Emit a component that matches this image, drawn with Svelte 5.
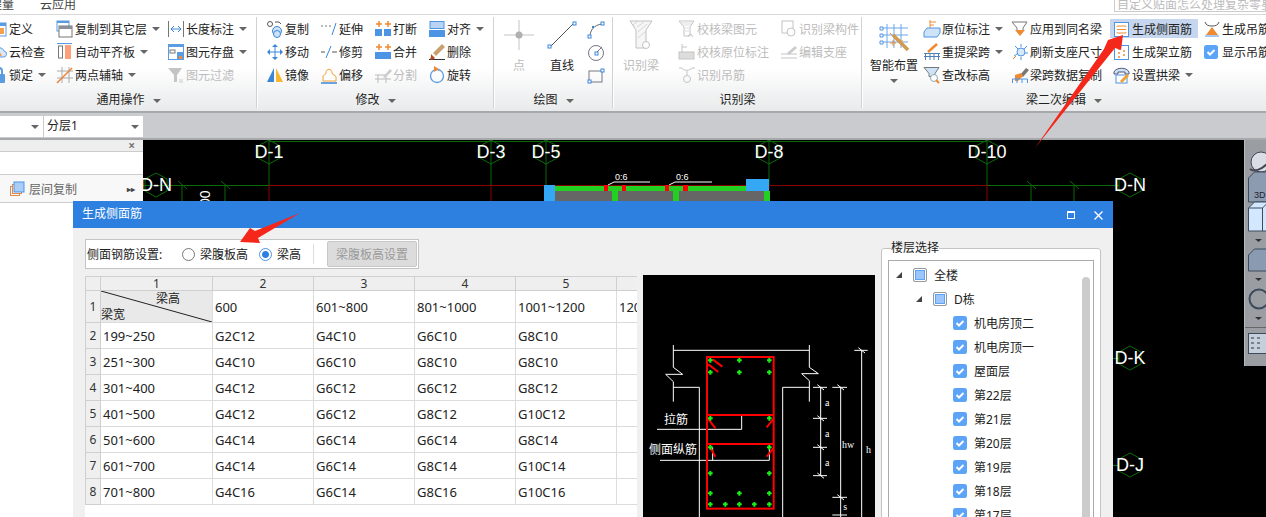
<script>
  const icons = {
    def: '<rect x="2" y="3" width="14" height="13" fill="#fff" stroke="#5b9be0"/><rect x="2" y="3" width="14" height="3" fill="#5b9be0"/><rect x="5" y="8" width="9" height="6" fill="#f6a04d"/>',
    cloud: '<path d="M4 14h9a3 3 0 0 0 1-6 5 5 0 0 0-9-1 4 4 0 0 0-1 7z" fill="#d8e8f8" stroke="#5b9be0"/><path d="M9 7l3 6H6z" fill="#f6a04d"/>',
    lock: '<path d="M6 8V5a3 3 0 0 1 6 0v3" fill="none" stroke="#5b9be0" stroke-width="2"/><rect x="3" y="8" width="12" height="9" rx="1" fill="#5b9be0"/>',
    copylayer: '<rect x="1" y="1" width="12" height="10" fill="#fff" stroke="#5b9be0"/><rect x="1" y="1" width="12" height="2" fill="#5b9be0"/><rect x="3" y="6" width="13" height="11" fill="#fff" stroke="#777"/><rect x="3" y="6" width="13" height="3" fill="#8a9099"/>',
    autoflat: '<rect x="1" y="0" width="15" height="1" fill="#5b9be0"/><rect x="2.500" y="3" width="4" height="12" fill="#fff" stroke="#777"/><rect x="9" y="2" width="6" height="14" fill="#fba078"/>',
    axis: '<path d="M1 5h16M1 12h16M6 1v16M13 1v16" stroke="#aaa" fill="none"/><path d="M1 17L16 2" stroke="#f08030" stroke-width="1.400"/>',
    len: '<path d="M1.500 1v16M16.500 1v16" stroke="#777" fill="none"/><path d="M4 9h10M4 9l3-3M4 9l3 3M14 9l-3-3M14 9l-3 3" stroke="#3c86d8" fill="none"/>',
    save: '<rect x="1.500" y="1.500" width="15" height="15" fill="#fff" stroke="#5b9be0"/><rect x="1" y="1" width="16" height="3" fill="#5b9be0"/><rect x="3" y="7" width="5" height="3" fill="none" stroke="#777"/><rect x="10" y="9" width="7" height="8" fill="#5b9be0"/><rect x="12" y="13" width="3" height="3" fill="#f68a3c"/>',
    filter: '<path d="M1 2h14L10 9v7H7V9z" fill="#c4c4c4"/><path d="M12 14h4M12 16h4" stroke="#ccc"/>',
    copy: '<circle cx="4" cy="4" r="2.500" fill="none" stroke="#555"/><path d="M9 2h4l2 2" fill="none" stroke="#555"/><circle cx="11" cy="11" r="4.500" fill="#cfe3f8" stroke="#3c86d8"/><circle cx="11" cy="14" r="3.500" fill="#cfe3f8" stroke="#3c86d8"/>',
    move: '<path d="M9 2v14M2 9h14" stroke="#3c86d8"/><path d="M9 1l3 3H6zM9 17l3-3H6zM1 9l3-3v6zM17 9l-3-3v6z" fill="#3c86d8"/>',
    mirror: '<path d="M8 2v14H1z" fill="#3c86d8"/><path d="M10 2v14h7z" fill="#f7b733"/>',
    extend: '<path d="M1 6h2M5 6h2M9 6h2" stroke="#777"/><path d="M12 15L16 3" stroke="#3c86d8"/>',
    trim: '<path d="M1 9h4M12 9h5" stroke="#555"/><path d="M6 15L11 3" stroke="#3c86d8"/>',
    offset: '<path d="M3 15V10c0-1 3-1 3-3 0-5 6-5 6 0 0 2 4 2 4 4v4z" fill="#fff" stroke="#f0a030"/><path d="M1 17h16" stroke="#3c86d8" stroke-width="1.500"/>',
    brk: '<path d="M5 1v6M2 4h6M14 1v6M11 4h6" stroke="#f08a30" stroke-width="1.500"/><rect x="1" y="9" width="7" height="7" fill="#4c94e4"/><rect x="10" y="9" width="7" height="7" fill="#4c94e4"/>',
    merge: '<path d="M5 1v6M2 4h6M14 1v6M11 4h6" stroke="#f08a30" stroke-width="1.500"/><rect x="1" y="9" width="16" height="7" fill="#4c94e4"/>',
    split: '<path d="M1 9h11v8M1 13h16M4 9v8" fill="none" stroke="#bbb"/><path d="M9 11l7-8 2 2-7 7z" fill="#ccc"/>',
    align: '<rect x="2" y="1.500" width="14" height="7" fill="#b9d3f3" stroke="#4c94e4"/><rect x="1" y="10" width="16" height="7" fill="#4c94e4"/>',
    del: '<path d="M1 16.500h16" stroke="#333"/><path d="M5 10L14 1l3 3-9 9z" fill="#caa070"/><path d="M3 11l4 4c-2 2-4 2-5 1 1-1 1-3 1-5z" fill="#b94a20"/>',
    rotate: '<circle cx="9" cy="10" r="6.500" fill="none" stroke="#5b9be0" stroke-width="1.300"/><path d="M6 0l5 3-5 3z" fill="#f08a30"/>',
    orig: '<path d="M7 0v9M7 2h6M7 5h4" stroke="#f08a30"/><path d="M1 12l3-4h13v5l-3 4H1z" fill="#cfe3f8" stroke="#4c94e4"/>',
    retake: '<path d="M5 9L14 1" stroke="#f08a30" stroke-width="2.500"/><path d="M1 10.500h16M2.500 10v7M7 11v6M11 11v6M15.500 10v7M1 13.500h16" fill="none" stroke="#4c7fb8"/>',
    elev: '<path d="M1 1.500h15l-4 6v3H6v-3z" fill="#cfe3f8" stroke="#777"/><circle cx="11" cy="12" r="3.500" fill="#fff" stroke="#8ab"/><path d="M13 14l3 3" stroke="#f08a30" stroke-width="2"/>',
    apply: '<path d="M1 2h15l-4 6v3H6V8z" fill="#fff" stroke="#777"/><path d="M4 10h10l-5 6z" fill="#f08a30"/>',
    refresh: '<circle cx="10" cy="9" r="4" fill="#d8e8f8" stroke="#4c94e4"/><path d="M10 1v3M16 3l-3 3M17 10h-3M4 3l3 3M3 13l3-2M10 14v3" stroke="#4c94e4"/><path d="M2 16l3-3" stroke="#f08a30"/>',
    paste: '<path d="M9 9l6-7 3 2-6 7z" fill="#777"/><path d="M4 9l6-2 2 3-5 5H4z" fill="#f08a30"/><path d="M1.500 17V13h15v4M6 13v4M11 13v4" fill="none" stroke="#4c94e4"/>',
    side: '<rect x="1.500" y="2.500" width="14" height="14" fill="#fff" stroke="#4c94e4"/><path d="M4 7c0-1 0-1 1-1h7c1 0 1 0 1 1M4 12c0 1 0 1 1 1h7c1 0 1 0 1-1M4 9.500h9" fill="none" stroke="#f08a30"/>',
    stand: '<rect x="1.500" y="2.500" width="14" height="14" fill="#fff" stroke="#4c94e4"/><path d="M6 5v2M6 9v2M6 13v2M11 7v2M11 11v2" stroke="#f08a30" stroke-width="1.500"/>',
    arch: '<path d="M1 6c2-5 13-5 15 0v2h-4V6H5v2H1z" fill="#cfe3f8" stroke="#557"/><rect x="3" y="9" width="11" height="8" fill="#fff" stroke="#4c94e4"/><path d="M7 15l7-7 2 2-7 7z" fill="#f0a030"/>',
    hang: '<path d="M2 2c1 3 3 4 7 4s6-1 7-4" fill="none" stroke="#555"/><path d="M9 7l6 8H3z" fill="#f08a30"/><path d="M2 16h14" stroke="#4c94e4"/>',
    checked: '<rect x="1" y="2" width="14" height="14" rx="2.500" fill="#5ba4f8"/><path d="M4.500 9l2.500 2.500 4.500-4.500" fill="none" stroke="#fff" stroke-width="2"/>',
    vbeam: '<path d="M1 1h15l-4 6v9H6V7z" fill="none" stroke="#c4c4c4"/><path d="M3 3h11M3 5h10M7 8h4M7 11h4" stroke="#ddd"/><path d="M10 16l3-2 2 3" fill="none" stroke="#c4c4c4"/>',
    vpart: '<rect x="2" y="1" width="11" height="12" fill="none" stroke="#c4c4c4"/><circle cx="11" cy="12" r="4" fill="#fff" stroke="#c4c4c4"/>',
    vorig: '<path d="M4 1v8M4 4h5" stroke="#c4c4c4"/><rect x="1" y="9" width="15" height="7" fill="#ddd" stroke="#c4c4c4"/>',
    vhang: '<path d="M1 2h3c1 3 8 3 10 0h3M9 5v4" fill="none" stroke="#c4c4c4"/><circle cx="9" cy="13" r="3.500" fill="none" stroke="#c4c4c4"/>',
    vsup: '<path d="M7 10l8-7 2 2-8 7z" fill="#ccc"/><path d="M1 11h16M1 15h16" stroke="#c4c4c4"/>',
    arc: '<path d="M3 16c0-7 4-12 12-13" fill="none" stroke="#666"/><rect x="1" y="14" width="3" height="3" fill="#fff" stroke="#3c86d8"/><rect x="14" y="1" width="3" height="3" fill="#fff" stroke="#3c86d8"/><rect x="5" y="5" width="2" height="2" fill="#3c86d8"/>',
    circ: '<circle cx="9" cy="9" r="7.500" fill="none" stroke="#778"/><rect x="8" y="8" width="3" height="3" fill="#fff" stroke="#3c86d8"/><path d="M10 8l5-5" stroke="#778"/>',
    rect: '<rect x="2" y="4" width="13" height="11" fill="none" stroke="#778"/><rect x="1" y="13" width="3" height="3" fill="#fff" stroke="#3c86d8"/><rect x="14" y="2" width="3" height="3" fill="#fff" stroke="#3c86d8"/>'
  }

  const groupA = [
    { w: 66, items: [{ t: '定义', i: 'def' }, { t: '云检查', i: 'cloud' }, { t: '锁定', i: 'lock', drop: true }] },
    { w: 111, items: [{ t: '复制到其它层', i: 'copylayer', drop: true }, { t: '自动平齐板', i: 'autoflat', drop: true }, { t: '两点辅轴', i: 'axis', drop: true }] },
    { w: 89, items: [{ t: '长度标注', i: 'len', drop: true }, { t: '图元存盘', i: 'save', drop: true }, { t: '图元过滤', i: 'filter', off: true }] }
  ]
  const groupB = [
    { w: 54, items: [{ t: '复制', i: 'copy' }, { t: '移动', i: 'move' }, { t: '镜像', i: 'mirror' }] },
    { w: 54, items: [{ t: '延伸', i: 'extend' }, { t: '修剪', i: 'trim' }, { t: '偏移', i: 'offset' }] },
    { w: 54, items: [{ t: '打断', i: 'brk' }, { t: '合并', i: 'merge' }, { t: '分割', i: 'split', off: true }] },
    { w: 60, items: [{ t: '对齐', i: 'align', drop: true }, { t: '删除', i: 'del' }, { t: '旋转', i: 'rotate' }] }
  ]
  const groupD = [
    { w: 102, items: [{ t: '校核梁图元', i: 'vbeam', off: true }, { t: '校核原位标注', i: 'vorig', off: true }, { t: '识别吊筋', i: 'vhang', off: true }] },
    { w: 92, items: [{ t: '识别梁构件', i: 'vpart', off: true }, { t: '编辑支座', i: 'vsup', off: true }] }
  ]
  const groupE = [
    { w: 88, items: [{ t: '原位标注', i: 'orig', drop: true }, { t: '重提梁跨', i: 'retake', drop: true }, { t: '查改标高', i: 'elev' }] },
    { w: 102, items: [{ t: '应用到同名梁', i: 'apply' }, { t: '刷新支座尺寸', i: 'refresh' }, { t: '梁跨数据复制', i: 'paste' }] },
    { w: 90, items: [{ t: '生成侧面筋', i: 'side', on: true }, { t: '生成架立筋', i: 'stand' }, { t: '设置拱梁', i: 'arch', drop: true }] },
    { w: 70, items: [{ t: '生成吊筋', i: 'hang' }, { t: '显示吊筋', i: 'checked' }] }
  ]

  const heads = ['2', '3', '4', '5', '6']
  const firstRow = ['600', '601~800', '801~1000', '1001~1200', '1201~1400']
  const rows = [
    ['199~250', 'G2C12', 'G4C10', 'G6C10', 'G8C10', ''],
    ['251~300', 'G4C10', 'G6C10', 'G8C10', 'G8C10', ''],
    ['301~400', 'G4C12', 'G6C12', 'G6C12', 'G8C12', ''],
    ['401~500', 'G4C12', 'G6C12', 'G8C12', 'G10C12', ''],
    ['501~600', 'G4C14', 'G6C14', 'G6C14', 'G8C14', ''],
    ['601~700', 'G4C14', 'G6C14', 'G8C14', 'G10C14', ''],
    ['701~800', 'G4C16', 'G6C14', 'G8C16', 'G10C16', '']
  ]

  const floors = ['机电房顶二', '机电房顶一', '屋面层', '第22层', '第21层', '第20层', '第19层', '第18层', '第17层', '第16层']

  // cad grid bubbles, in page coordinates
  const bubbles = [
    { x: 269, y: 152, t: 'D-1' }, { x: 491, y: 152, t: 'D-3' }, { x: 546, y: 152, t: 'D-5' },
    { x: 769, y: 152, t: 'D-8' }, { x: 987, y: 152, t: 'D-10' }, { x: 156, y: 185, t: 'D-N' },
    { x: 1130, y: 185, t: 'D-N' }, { x: 1130, y: 358, t: 'D-K' }, { x: 1130, y: 465, t: 'D-J' }
  ]
  const hex = (x, y) => `${x},${y - 12} ${x + 11},${y - 6} ${x + 11},${y + 6} ${x},${y + 12} ${x - 11},${y + 6} ${x - 11},${y - 6}`

  const dots = [[241,271],[328,271],[418,271],[241,307],[328,307],[418,307],[241,445],[418,445],[241,532],[418,532],[241,610],[418,610],[241,670],[328,670],[418,670],[241,703],[286,703],[328,703],[373,703],[418,703]]
</script>

{#snippet icon(name, size = 18)}
  <svg class="ico" width={size} height={size} viewBox="0 0 18 18">{@html icons[name]}</svg>
{/snippet}

{#snippet columns(cols)}
  {#each cols as col}
    <div class="col" style="width:{col.w}px">
      {#each col.items as it}
        <div class="item" class:off={it.off} class:on={it.on}>
          {@render icon(it.i)}
          <span>{it.t}</span>
          {#if it.drop}<i class="tri"></i>{/if}
        </div>
      {/each}
    </div>
  {/each}
{/snippet}

<div class="app">
  <div class="tabs">
    <span class="tab first">工程量</span>
    <span class="tab">云应用</span>
    <div class="search">自定义贴面怎么处理复杂零星梁</div>
  </div>

  <div class="ribbon">
    <section class="group ga">
      <div class="body shift">{@render columns(groupA)}</div>
      <div class="foot">通用操作 <i class="tri"></i></div>
    </section>
    <section class="group gb">
      <div class="body">{@render columns(groupB)}</div>
      <div class="foot">修改 <i class="tri"></i></div>
    </section>
    <section class="group gc">
      <div class="body">
        <div class="large off pt">
          <svg width="30" height="30" viewBox="0 0 30 30"><path d="M15 0v30M0 15h30" stroke="#c4c4c4"/><circle cx="15" cy="15" r="3.500" fill="#b0b0b0"/></svg>
          <span>点</span>
        </div>
        <div class="large ln">
          <svg width="30" height="30" viewBox="0 0 30 30"><path d="M3 27L27 3" stroke="#555"/><rect x="1" y="25" width="3" height="3" fill="#fff" stroke="#3c86d8"/><rect x="26" y="2" width="3" height="3" fill="#fff" stroke="#3c86d8"/></svg>
          <span>直线</span>
        </div>
        <div class="smalls">{@render icon('arc')}{@render icon('circ')}{@render icon('rect')}</div>
      </div>
      <div class="foot">绘图 <i class="tri"></i></div>
    </section>
    <section class="group gd">
      <div class="body">
        <div class="large off rec">
          <svg width="30" height="30" viewBox="0 0 24 30"><path d="M1 1h22l-6 9v18H7V10z" fill="#f6f6f6" stroke="#c0c0c0"/><path d="M4 5l4-3M8 7l7-5M9 12l9-8M9 18l8-7" stroke="#d6d6d6"/><circle cx="17" cy="25" r="3.500" fill="#fff" stroke="#c0c0c0"/></svg>
          <span>识别梁</span>
        </div>
        {@render columns(groupD)}
      </div>
      <div class="foot">识别梁</div>
    </section>
    <section class="group ge">
      <div class="body">
        <div class="large smart">
          <svg width="30" height="30" viewBox="0 0 30 30">
            <path d="M8 4v24M15 4v24M22 4v24M3 8h26M3 15h26M3 22h26" stroke="#6aa6e8"/>
            <path d="M1 7h3v3H1zM1 14h3v3H1zM1 21h3v3H1z" fill="#fff" stroke="#4c94e4"/>
            <path d="M11 13l3 3M14 20v6M11 23h6M21 19v5M19 21h5" stroke="#f08a30"/>
            <path d="M14 15l15 15" stroke="#d09a50" stroke-width="3.500"/>
          </svg>
          <span>智能布置</span>
          <i class="tri"></i>
        </div>
        {@render columns(groupE)}
      </div>
      <div class="foot">梁二次编辑 <i class="tri"></i></div>
    </section>
  </div>

  <div class="bar">
    <div class="select a"><i class="tri"></i></div>
    <div class="select b">分层1<i class="tri"></i></div>
  </div>

  <div class="work">
    <aside class="left">
      <div class="left-head"><span>×</span></div>
      <div class="left-gap"></div>
      <div class="left-row">
        <svg width="16" height="16" viewBox="0 0 16 16"><rect x="1.500" y="5.500" width="9" height="9" fill="none" stroke="#e08a50"/><rect x="3.500" y="3.500" width="9" height="9" fill="#fff" stroke="#e08a50"/><rect x="5" y="1" width="10" height="10" fill="#a9cdf5" stroke="#4c94e4"/></svg>
        <span>层间复制</span>
        <b>▸▸</b>
      </div>
    </aside>

    <svg class="cad" viewBox="143 140 1123 377">
      <path d="M269 141.500H987" stroke="#0a6b0a" fill="none"/>
      <path d="M269 140V185M491 140V185M546 140V185M769 140V185M987 140V185" stroke="#0a6b0a"/>
      <path d="M143 185.500H269M987 185.500H1119" stroke="#0a6b0a"/>
      <path d="M269 185.500H987" stroke="#8b0000"/>
      <path d="M269 185V201M491 185V201M546 185V201M769 185V201M987 185V201" stroke="#8b0000"/>
      <path d="M182 185V201M225 185V201M1031 185V201M1074 185V201M178 181l9 8M221 181l9 8M1027 181l9 8M1070 181l9 8" stroke="#0a6b0a"/>
      <path d="M1113 358.500h6M1113 465.500h6" stroke="#0a6b0a"/>
      {#each bubbles as b}
        <polygon points={hex(b.x, b.y)} fill="none" stroke="#0a6b0a"/>
        <text class="axis-t" x={b.x} y={b.y + 6} text-anchor="middle">{b.t}</text>
      {/each}
      <text class="axis-t zero" transform="translate(210 206) rotate(-90)">00</text>

      <rect x="544" y="185" width="11" height="16" fill="#35a8f5"/>
      <rect x="555" y="191" width="214" height="10" fill="#666"/>
      <rect x="555" y="186" width="214" height="5" fill="#22d022"/>
      <rect x="612" y="191" width="6" height="10" fill="#22d022"/>
      <rect x="673" y="191" width="6" height="10" fill="#22d022"/>
      <rect x="764" y="191" width="6" height="10" fill="#22d022"/>
      <rect x="746" y="179" width="23" height="12" fill="#35a8f5"/>
      <path d="M604 185h4v6h-4zM622 185h4v6h-4zM665 185h4v6h-4zM683 185h5v6h-5z" fill="#f00"/>
      <path d="M608 185l6-3h36M669 185l6-3h37" fill="none" stroke="#fff"/>
      <text class="small-t" x="615" y="180">0:6</text>
      <text class="small-t" x="676" y="180">0:6</text>
    </svg>

    <div class="strip">
      <svg width="22" height="226" viewBox="0 0 22 226">
        <circle cx="16" cy="22" r="10" fill="#d9dee4" stroke="#445"/>
        <path d="M5 29c4 3 11 1 17-5" fill="none" stroke="#445" stroke-width="2"/>
        <path d="M3.500 38l6-6h14v30h-20z" fill="#8d9bb0" stroke="#3d4a5c"/>
        <text x="9" y="58" font-size="9" font-family="Liberation Sans" fill="#1c2530">3D</text>
        <path d="M3.500 68l6-6h14v29h-20z" fill="#d3e8ff" stroke="#3d4a5c"/>
        <path d="M3.500 68h14v23M17.500 68l6-6" fill="none" stroke="#3d4a5c"/>
        <path d="M10 99h7l-3.500 3z" fill="#333"/>
        <path d="M3.500 115l6-6h14v22h-20z" fill="#8a9ab0" stroke="#3d4a5c"/>
        <path d="M10 138h7l-3.500 3z" fill="#333"/>
        <circle cx="14" cy="159" r="9.500" fill="none" stroke="#3d4a5c" stroke-width="2"/>
        <path d="M10 177h7l-3.500 3z" fill="#333"/>
        <path d="M0 187.500h22" stroke="#666"/>
        <rect x="3.500" y="193.500" width="20" height="20" fill="#c4cfdb" stroke="#3d4a5c"/>
        <path d="M6 198h3M6 203h3M6 208h3M12 198h3M12 203h3M12 208h3" stroke="#334"/>
      </svg>
    </div>
  </div>

  <div class="dialog">
    <header class="title">
      <span>生成侧面筋</span>
      <svg class="win" width="8" height="8" viewBox="0 0 8 8"><rect x=".5" y="1.500" width="7" height="6" fill="none" stroke="#fff"/><path d="M0 1h8" stroke="#fff" stroke-width="2"/></svg>
      <svg class="close" width="9" height="9" viewBox="0 0 9 9"><path d="M.5 .5l8 8M8.500 .5l-8 8" stroke="#fff" stroke-width="1.300"/></svg>
    </header>
    <div class="dlg-body">
      <div class="dlg-left">
        <div class="settings">
          <span class="lbl">侧面钢筋设置:</span>
          <span class="radio"></span><span class="r1">梁腹板高</span>
          <span class="radio sel"></span><span class="r2">梁高</span>
          <span class="sep"></span>
          <button disabled>梁腹板高设置</button>
        </div>
        <div class="lower">
          <div class="grid">
            <table>
              <colgroup><col class="c0"/><col class="c1"/><col class="cn"/><col class="cn"/><col class="cn"/><col class="cn"/><col class="cn"/></colgroup>
              <thead>
                <tr><th></th><th>1</th>{#each heads as h}<th>{h}</th>{/each}</tr>
              </thead>
              <tbody>
                <tr class="tall">
                  <th>1</th>
                  <td class="diag">
                    <svg width="111" height="31" viewBox="0 0 111 31" preserveAspectRatio="none"><path d="M0 0L111 31" stroke="#222"/></svg>
                    <span class="d1">梁高</span><span class="d2">梁宽</span>
                  </td>
                  {#each firstRow as c}<td>{c}</td>{/each}
                </tr>
                {#each rows as r, n}
                  <tr>
                    <th>{n + 2}</th>
                    {#each r as c}<td>{c}</td>{/each}
                  </tr>
                {/each}
              </tbody>
            </table>
          </div>
          <div class="pic">
            <svg width="232" height="242" viewBox="39 15 696 726">
              <g fill="none" stroke="#fff" stroke-width="3">
                <path d="M130 241H538M130 225V292L158 313H107L130 335V395M538 225V292L565 311H515L538 332V395"/>
                <path d="M130 352H208V741M538 352H458V741"/>
                <path d="M81 478H335V435M90 571H418V532M248 571V532"/>
                <path d="M572 352V617M549 352H591M549 445H591M549 532H591M549 617H591M562 344l20 16M562 437l20 16M562 524l20 16M562 609l20 16"/>
                <path d="M632 352V741M607 352H651M607 682H651M607 735H651M622 344l20 16M622 674l20 16"/>
                <path d="M695 241V741M673 241H713M685 233l20 16"/>
              </g>
              <g fill="none" stroke="#f00" stroke-width="6">
                <rect x="231" y="261" width="200" height="455"/>
                <path d="M231 435H431M231 522H431M248 268L277 290M235 283L265 306M235 447L256 475M430 447L410 472M240 530L256 560M430 535L410 560"/>
              </g>
              {#each dots as d}
                <path d="M{d[0] - 7} {d[1]}h14M{d[0]} {d[1] - 7}v14" stroke="#18f018" stroke-width="6"/>
              {/each}
              <g class="pic-t">
                <text x="102" y="462">拉筋</text>
                <text x="57" y="553">侧面纵筋</text>
              </g>
              <g class="pic-s">
                <text x="585" y="407">a</text><text x="585" y="500">a</text><text x="585" y="587">a</text>
                <text x="636" y="535">hw</text><text x="708" y="550">h</text><text x="640" y="720">s</text>
              </g>
            </svg>
          </div>
        </div>
      </div>
      <fieldset>
        <legend>楼层选择</legend>
        <div class="tree">
          <div class="row" style="padding-left:6px"><i class="exp"></i><i class="part"></i><span>全楼</span></div>
          <div class="row" style="padding-left:26px"><i class="exp"></i><i class="part"></i><span>D栋</span></div>
          {#each floors as f}
            <div class="row" style="padding-left:46px"><i class="exp none"></i>
              <svg class="chk" width="14" height="14" viewBox="0 0 14 14"><rect width="14" height="14" rx="2.500" fill="#5ba4f8"/><path d="M3.500 7l2.500 2.500 4.500-4.500" fill="none" stroke="#fff" stroke-width="2"/></svg>
              <span>{f}</span>
            </div>
          {/each}
          <div class="thumb"></div>
        </div>
      </fieldset>
    </div>
  </div>

  <!-- red annotation arrows drawn over the screenshot -->
  <svg class="marks" width="1266" height="517" viewBox="0 0 1266 517">
    <path d="M1035 148L1104 49L1108 40L1123 35L1121 50L1115 48Z" fill="#f5261a"/>
    <path d="M300 213L255 231L250 228L240 242L260 243L258 238Z" fill="#f5261a"/>
  </svg>
</div>

<style>
  :global(body) {
    margin: 0;
    background: #fff;
  }
  .app {
    position: relative;
    width: 1266px;
    height: 517px;
    overflow: hidden;
    display: flex;
    flex-direction: column;
    font-family: "Noto Sans", "Noto Sans CJK SC", sans-serif;
    font-size: 12px;
    color: #222;
  }

  .tabs {
    height: 14px;
    flex: none;
    display: flex;
    align-items: flex-start;
    overflow: hidden;
    background: #fff;
    line-height: 10px;
  }
  .tab {
    margin-left: 26px;
    color: #444;
  }
  .tab.first {
    margin-left: -22px;
  }
  .search {
    margin-left: auto;
    width: 148px;
    height: 11px;
    margin-top: 0;
    border: 1px solid #ccc;
    border-top: 0;
    padding-left: 2px;
    color: #bbb;
    white-space: nowrap;
    overflow: hidden;
    line-height: 10px;
  }

  .ribbon {
    height: 99px;
    flex: none;
    display: flex;
    overflow: hidden;
    box-sizing: border-box;
    border-top: 1px solid #d8d8d8;
    border-bottom: 2px solid #a6a8ab;
    background: linear-gradient(#fff 55%, #e8eaeb);
  }
  .group {
    position: relative;
    flex: none;
    box-sizing: border-box;
    display: flex;
    flex-direction: column;
  }
  .group::after {
    content: "";
    position: absolute;
    right: 0;
    top: 2px;
    bottom: 3px;
    width: 1px;
    background: #cfd1d3;
    box-shadow: 1px 0 0 #fff;
  }
  .ge::after {
    display: none;
  }
  .ga { width: 257px; }
  .gb { width: 237px; padding-left: 9px; }
  .gc { width: 119px; }
  .gd { width: 249px; }
  .ge { width: 404px; }
  .body {
    height: 72px;
    padding-top: 2px;
    display: flex;
    flex: none;
  }
  .body.shift {
    margin-left: -10px;
  }
  .foot {
    text-align: center;
    line-height: 22px;
    color: #222;
  }
  .gb .foot { margin-left: -9px; }
  .col {
    flex: none;
  }
  .item {
    height: 23px;
    display: flex;
    align-items: center;
    white-space: nowrap;
  }
  .item .ico {
    flex: none;
    margin-right: 1px;
  }
  .item.on {
    height: 19px;
    margin: 2px 0;
    margin-left: -3px;
    padding-left: 3px;
    width: 85px;
    background: #c5d6ee;
  }
  .off {
    color: #bcbcbc;
  }
  .tri {
    display: inline-block;
    width: 0;
    height: 0;
    margin-left: 5px;
    border: 4px solid transparent;
    border-top-color: #666;
    border-bottom: 0;
    vertical-align: middle;
  }
  .large {
    display: flex;
    flex-direction: column;
    align-items: center;
    flex: none;
    line-height: 16px;
  }
  .large svg {
    margin-top: 3px;
    overflow: visible;
  }
  .large span {
    margin-top: 8px;
  }
  .pt { width: 30px; margin-left: 10px; }
  .ln { width: 30px; margin-left: 13px; }
  .smalls {
    margin-left: 10px;
    margin-top: 4px;
    display: flex;
    flex-direction: column;
    gap: 5px;
  }
  .rec { width: 38px; margin-left: 9px; margin-right: 18px; }
  .smart { width: 48px; margin-left: 8px; margin-right: 5px; }
  .smart .tri { margin: 5px 0 0; }

  .bar {
    height: 27px;
    flex: none;
    box-sizing: border-box;
    display: flex;
    gap: 1px;
    padding-top: 3px;
    background: #c9cbcf;
    border-bottom: 2px solid #a6a8ab;
  }
  .select {
    position: relative;
    height: 21px;
    box-sizing: border-box;
    background: #fff;
    line-height: 20px;
    padding-left: 3px;
  }
  .select.a { width: 43px; }
  .select.b { width: 99px; }
  .select .tri {
    position: absolute;
    right: 4px;
    top: 9px;
    margin: 0;
  }

  .work {
    position: relative;
    flex: 1;
    min-height: 0;
    display: flex;
    background: #000;
  }
  .left {
    width: 143px;
    flex: none;
    background: #fff;
  }
  .left-head {
    height: 11px;
    background: #eee;
    border-bottom: 1px solid #ccc;
    text-align: right;
    padding-right: 8px;
    line-height: 11px;
    color: #777;
    font-weight: 700;
  }
  .left-gap {
    height: 22px;
    border-bottom: 1px solid #ccc;
  }
  .left-row {
    height: 27px;
    display: flex;
    align-items: center;
    padding-left: 9px;
    gap: 4px;
    color: #666;
    border-bottom: 1px solid #ccc;
    background: #f8f8f8;
  }
  .left-row b {
    margin-left: auto;
    padding-right: 8px;
    font-size: 8px;
    color: #444;
  }
  .cad {
    flex: 1;
    min-width: 0;
    height: 377px;
    display: block;
  }
  .axis-t {
    font-family: "Liberation Sans", sans-serif;
    font-size: 18px;
    fill: #fff;
  }
  .axis-t.zero {
    font-size: 14px;
  }
  .small-t {
    font-family: "Liberation Sans", sans-serif;
    font-size: 9px;
    fill: #fff;
  }
  .strip {
    position: absolute;
    right: 0;
    top: 0;
    width: 22px;
    height: 226px;
    background: #9a9da1;
    border-left: 1px solid #b8babd;
    box-sizing: border-box;
    overflow: hidden;
  }

  .dialog {
    position: absolute;
    left: 73px;
    top: 201px;
    width: 1040px;
    height: 316px;
    background: #f0f0f0;
    display: flex;
    flex-direction: column;
  }
  .title {
    position: relative;
    height: 27px;
    flex: none;
    background: #2d7fe0;
    color: #fff;
    line-height: 26px;
    padding-left: 9px;
  }
  .win {
    position: absolute;
    left: 994px;
    top: 10px;
  }
  .close {
    position: absolute;
    left: 1021px;
    top: 10px;
  }
  .dlg-body {
    flex: 1;
    min-height: 0;
    display: flex;
    gap: 6px;
    padding: 11px 12px 0;
  }
  .dlg-left {
    width: 790px;
    flex: none;
  }
  .settings {
    width: 334px;
    height: 30px;
    box-sizing: border-box;
    display: flex;
    align-items: center;
    background: #fff;
    border: 1px solid #c4c4c4;
    padding-left: 1px;
  }
  .lbl { width: 95px; }
  .radio {
    width: 13px;
    height: 13px;
    box-sizing: border-box;
    border: 1px solid #777;
    border-radius: 50%;
    background: #fff;
  }
  .radio.sel {
    border-color: #4c94e4;
    background: radial-gradient(circle, #2d7fe0 0 3px, #fff 4px);
  }
  .r1 { margin: 0 11px 0 5px; }
  .r2 { margin-left: 5px; width: 36px; }
  .sep {
    width: 1px;
    height: 20px;
    background: #ddd;
  }
  button {
    margin-left: 13px;
    width: 90px;
    height: 26px;
    border: 1px solid #c8c8c8;
    border-radius: 2px;
    background: #dcdcdc;
    color: #9a9a9a;
    font: inherit;
    padding: 0;
  }
  .lower {
    display: flex;
    gap: 6px;
    margin-top: 6px;
  }
  .grid {
    width: 552px;
    height: 242px;
    margin-top: 1px;
    flex: none;
    overflow: hidden;
    background: #fff;
  }
  table {
    table-layout: fixed;
    width: 616px;
    border-collapse: collapse;
  }
  .c0 { width: 15px; }
  .c1 { width: 112px; }
  .cn { width: 101px; }
  th {
    background: #efefef;
    border: 1px solid #cfcfcf;
    font-weight: 400;
    padding: 0;
    height: 13px;
    line-height: 12px;
    color: #333;
  }
  td {
    height: 25px;
    padding: 0 0 0 2px;
    border: 1px solid #dcdcdc;
    white-space: nowrap;
    overflow: hidden;
    font-size: 13px;
    line-height: 18px;
  }
  tr.tall td, tr.tall th {
    height: 31px;
  }
  .diag {
    position: relative;
    background: #e9e9e9;
    padding: 0;
    font-size: 12px;
  }
  .diag svg {
    position: absolute;
    left: 0;
    top: 0;
    display: block;
  }
  .d1 {
    position: absolute;
    left: 55px;
    top: 0;
    line-height: 16px;
  }
  .d2 {
    position: absolute;
    left: 0;
    top: 16px;
    line-height: 15px;
  }
  .pic {
    width: 232px;
    height: 242px;
    flex: none;
    background: #000;
  }
  .pic svg {
    display: block;
  }
  .pic-t text {
    font-size: 36px;
    fill: #fff;
  }
  .pic-s text {
    font-family: "Liberation Serif", serif;
    font-size: 30px;
    fill: #fff;
  }
  fieldset {
    width: 220px;
    box-sizing: border-box;
    height: 300px;
    margin: 1px 0 0;
    padding: 4px 6px 0;
    background: #fff;
    border: 1px solid #c4c4c4;
    border-radius: 3px;
  }
  legend {
    margin-left: 3px;
    padding: 0;
    line-height: 16px;
    background: transparent;
  }
  .tree {
    position: relative;
    height: 300px;
    box-sizing: border-box;
    border: 1px solid #aaa;
    padding-top: 2px;
  }
  .row {
    height: 24px;
    display: flex;
    align-items: center;
    color: #222;
  }
  .exp {
    width: 18px;
    flex: none;
    position: relative;
    height: 8px;
  }
  .exp::before {
    content: "";
    position: absolute;
    left: 1px;
    top: 1px;
    border-style: solid;
    border-width: 0 0 6px 6px;
    border-color: transparent transparent #444 transparent;
  }
  .exp.none::before {
    display: none;
  }
  .part {
    width: 14px;
    height: 14px;
    flex: none;
    box-sizing: border-box;
    border: 1px solid #999;
    border-radius: 2px;
    background: #9cc6fb;
    box-shadow: inset 0 0 0 1px #fff, inset 0 0 0 2px #5ba4f8;
  }
  .row span {
    margin-left: 7px;
  }
  .chk {
    flex: none;
  }
  .thumb {
    position: absolute;
    left: 193px;
    top: 16px;
    bottom: 0;
    width: 8px;
    border-radius: 4px 4px 0 0;
    background: #ccc;
  }
  .marks {
    position: absolute;
    left: 0;
    top: 0;
    pointer-events: none;
  }
</style>
